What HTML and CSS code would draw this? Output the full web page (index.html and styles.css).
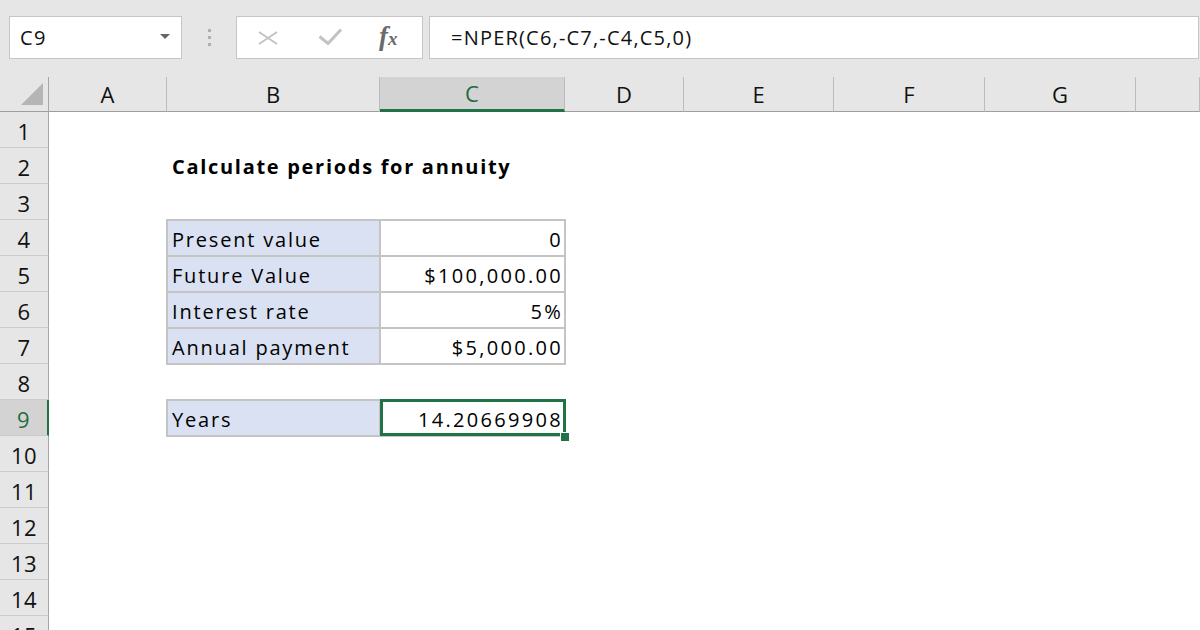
FILE: index.html
```html
<!DOCTYPE html>
<html lang="en">
<head>
<meta charset="utf-8">
<title>NPER - Calculate periods for annuity</title>
<link rel="stylesheet" href="styles.css">
</head>
<body>
<div class="app">
  <div class="toolbar">
    <div class="namebox">
      <span class="name">C9</span>
      <svg class="dd" width="10" height="5" viewBox="0 0 10 5"><path d="M0 0H10L5 5Z"/></svg>
    </div>
    <div class="grip"><i></i><i></i><i></i></div>
    <div class="fxbox">
      <svg class="cancel" width="20" height="14" viewBox="0 0 20 14"><path d="M1 1L19 13M19 1L1 13"/></svg>
      <svg class="enter" width="24" height="17" viewBox="0 0 24 17"><path d="M1.5 8.5L10 15.5L23 1.5"/></svg>
      <span class="fx"><span class="f">f</span><span class="x">x</span></span>
    </div>
    <div class="formula">=NPER(C6,-C7,-C4,C5,0)</div>
  </div>

  <div class="sheet">
    <div class="ch corner"><svg width="22" height="22" viewBox="0 0 22 22"><path d="M22 0V22H0Z"/></svg></div>
    <div class="ch">A</div>
    <div class="ch">B</div>
    <div class="ch sel-col">C</div>
    <div class="ch">D</div>
    <div class="ch">E</div>
    <div class="ch">F</div>
    <div class="ch">G</div>
    <div class="ch"></div>

    <div class="rh">1</div><div></div><div></div><div></div><div></div><div></div><div></div><div></div><div></div>
    <div class="rh">2</div><div></div><div class="title">Calculate periods for annuity</div><div></div><div></div><div></div><div></div><div></div><div></div>
    <div class="rh">3</div><div></div><div></div><div></div><div></div><div></div><div></div><div></div><div></div>
    <div class="rh">4</div><div></div><div class="lbl">Present value</div><div class="val">0</div><div></div><div></div><div></div><div></div><div></div>
    <div class="rh">5</div><div></div><div class="lbl">Future Value</div><div class="val">$100,000.00</div><div></div><div></div><div></div><div></div><div></div>
    <div class="rh">6</div><div></div><div class="lbl">Interest rate</div><div class="val">5%</div><div></div><div></div><div></div><div></div><div></div>
    <div class="rh">7</div><div></div><div class="lbl">Annual payment</div><div class="val">$5,000.00</div><div></div><div></div><div></div><div></div><div></div>
    <div class="rh">8</div><div></div><div></div><div></div><div></div><div></div><div></div><div></div><div></div>
    <div class="rh sel-row">9</div><div></div><div class="lbl">Years</div><div class="val active">14.20669908<span class="selbox"></span><span class="handle"></span></div><div></div><div></div><div></div><div></div><div></div>
    <div class="rh">10</div><div></div><div></div><div></div><div></div><div></div><div></div><div></div><div></div>
    <div class="rh">11</div><div></div><div></div><div></div><div></div><div></div><div></div><div></div><div></div>
    <div class="rh">12</div><div></div><div></div><div></div><div></div><div></div><div></div><div></div><div></div>
    <div class="rh">13</div><div></div><div></div><div></div><div></div><div></div><div></div><div></div><div></div>
    <div class="rh">14</div><div></div><div></div><div></div><div></div><div></div><div></div><div></div><div></div>
    <div class="rh">15</div><div></div><div></div><div></div><div></div><div></div><div></div><div></div><div></div>
  </div>
</div>
</body>
</html>
```

FILE: styles.css
```css
* { box-sizing: border-box; }

body {
  margin: 0;
  background: #ffffff;
  font-family: "Open Sans", "Noto Sans", sans-serif;
  color: #000;
}

.app {
  width: 1200px;
  height: 630px;
  overflow: hidden;
  background: #e6e6e6;
}

/* ---------- formula bar ---------- */
.toolbar {
  height: 77px;
  display: flex;
  align-items: flex-start;
  padding-top: 16px;
}

.namebox {
  margin-left: 9px;
  width: 173px;
  height: 43px;
  background: #fff;
  border: 1px solid #c6c6c6;
  display: flex;
  align-items: center;
  justify-content: space-between;
  padding: 0 11px 0 10px;
}

.name {
  font-size: 20px;
  letter-spacing: 1.5px;
  line-height: 41px;
  color: #111;
}

.dd path { fill: #666; }
.dd { margin-top: -3px; }

.grip {
  width: 54px;
  height: 43px;
  display: flex;
  flex-direction: column;
  align-items: center;
  gap: 4px;
  padding-top: 13px;
}

.grip i {
  display: block;
  width: 3px;
  height: 3px;
  background: #b0b0b0;
}

.fxbox {
  width: 187px;
  height: 43px;
  background: #fff;
  border: 1px solid #c6c6c6;
  display: flex;
  align-items: center;
  padding-left: 21px;
}

.cancel path {
  stroke: #c3c3c3;
  stroke-width: 2;
  fill: none;
}

.enter {
  margin-left: 40px;
  margin-top: -2px;
}

.enter path {
  stroke: #c3c3c3;
  stroke-width: 3;
  fill: none;
}

.fx {
  margin-left: 37px;
  font-family: "Liberation Serif", serif;
  font-style: italic;
  color: #6a6a6a;
  line-height: 1;
  margin-top: -3px;
}

.fx .f { font-size: 27px; font-weight: 700; }
.fx .x { font-size: 19px; font-weight: 700; margin-left: 0; }

.formula {
  margin-left: 6px;
  width: 770px;
  height: 43px;
  background: #fff;
  border: 1px solid #c6c6c6;
  padding-left: 21px;
  font-size: 20px;
  letter-spacing: 1.2px;
  line-height: 41px;
  color: #111;
  white-space: nowrap;
}

/* ---------- worksheet grid ---------- */
.sheet {
  display: grid;
  grid-template-columns: 49px 118px 213px 185px 119px 150px 151px 151px 1fr;
  grid-template-rows: 35px;
  grid-auto-rows: 36px;
  background: #fff;
}

.sheet > div {
  min-width: 0;
}

.sheet > .ch {
  background: #e6e6e6;
  border-right: 1px solid #bcbcbc;
  border-bottom: 1px solid #9e9e9e;
  text-align: center;
  font-size: 22px;
  line-height: 35px;
  color: #111;
}

.sheet > .corner {
  border-right-color: #a6a6a6;
  display: flex;
  justify-content: flex-end;
  align-items: flex-end;
  padding: 0 5px 6px 0;
}

.corner path { fill: #b5b5b5; }

.sheet > .sel-col {
  background: #d3d3d3;
  border-bottom: 3px solid #217346;
  color: #1e6b40;
  line-height: 33px;
}

.sheet > .rh {
  background: #e6e6e6;
  border-right: 1px solid #a6a6a6;
  border-bottom: 1px solid #cacaca;
  text-align: center;
  font-size: 22px;
  letter-spacing: 0.5px;
  line-height: 36px;
  padding-top: 1px;
  color: #111;
}

.sheet > .sel-row {
  background: #d3d3d3;
  border-right: 2px solid #217346;
  color: #1e6b40;
}

.title {
  position: relative;
  z-index: 1;
  white-space: nowrap;
  font-weight: 700;
  font-size: 20px;
  letter-spacing: 1.7px;
  line-height: 36px;
  padding: 1px 0 0 5px;
}

.lbl,
.val {
  border: 1px solid #c4c4c4;
  box-shadow: 0 0 0 1px #c4c4c4;
  font-size: 20px;
  letter-spacing: 1.8px;
  line-height: 34px;
  padding-top: 2px;
  white-space: nowrap;
  color: #000;
}

.sheet > .lbl {
  background: #d9e1f2;
  padding-left: 4px;
}

.val {
  background: #fff;
  text-align: right;
  padding-right: 1px;
  letter-spacing: 2.3px;
}

.active {
  position: relative;
}

.selbox {
  position: absolute;
  left: -1px;
  top: -2px;
  right: -2px;
  bottom: -1px;
  border: 3px solid #217346;
}

.handle {
  position: absolute;
  right: -5px;
  bottom: -6px;
  width: 9px;
  height: 9px;
  background: #217346;
  border-left: 1px solid #fff;
  border-top: 1px solid #fff;
}
```
